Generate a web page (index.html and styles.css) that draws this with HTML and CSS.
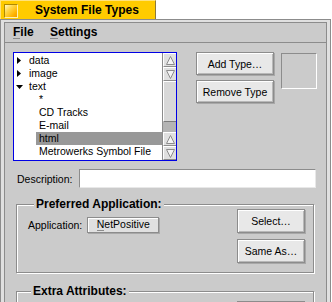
FILE: index.html
```html
<!DOCTYPE html>
<html lang="en">
<head>
  <meta charset="UTF-8">
  <title>System File Types</title>
  <link rel="stylesheet" href="styles.css">
</head>
<body>
  <div class="window">
    <div class="tab">
      <span class="close-box"></span>
      <span class="tab-title">System File Types</span>
    </div>
    <div class="frame">
      <div class="inner">
        <div class="menubar">
          <span class="menu"><span class="mn">F</span>ile</span>
          <span class="menu"><span class="mn">S</span>ettings</span>
        </div>

        <div class="content">
          <!-- type list + buttons -->
          <div class="top-row">
            <div class="type-list">
              <ul class="tree">
                <li class="row top"><svg class="twisty" width="8" height="8" viewBox="0 0 8 8"><polygon points="1,0 5,3.5 1,7"/></svg>data</li>
                <li class="row top"><svg class="twisty" width="8" height="8" viewBox="0 0 8 8"><polygon points="1,0 5,3.5 1,7"/></svg>image</li>
                <li class="row top"><svg class="twisty" width="8" height="8" viewBox="0 0 8 8"><polygon points="0,2 7,2 3.5,6"/></svg>text</li>
                <li class="row child">*</li>
                <li class="row child">CD Tracks</li>
                <li class="row child">E-mail</li>
                <li class="row child selected">html</li>
                <li class="row child">Metrowerks Symbol File</li>
              </ul>
              <div class="vscroll">
                <div class="sb-btn"><svg width="9" height="9" viewBox="0 0 9 9"><polygon points="0.5,8.5 4.5,0.5 8.5,8.5"/></svg></div>
                <div class="sb-btn"><svg width="9" height="9" viewBox="0 0 9 9"><polygon points="0.5,0.5 8.5,0.5 4.5,8.5"/></svg></div>
                <div class="sb-thumb"></div>
                <div class="sb-track"></div>
                <div class="sb-btn"><svg width="9" height="9" viewBox="0 0 9 9"><polygon points="0.5,8.5 4.5,0.5 8.5,8.5"/></svg></div>
                <div class="sb-btn"><svg width="9" height="9" viewBox="0 0 9 9"><polygon points="0.5,0.5 8.5,0.5 4.5,8.5"/></svg></div>
              </div>
            </div>
            <div class="type-buttons">
              <button class="btn">Add Type…</button>
              <button class="btn">Remove Type</button>
            </div>
            <div class="icon-well"></div>
          </div>

          <div class="desc-row">
            <span class="desc-label">Description:</span>
            <div class="textbox"></div>
          </div>

          <!-- Preferred Application -->
          <div class="box pref-box">
            <span class="box-title">Preferred Application:</span>
            <div class="box-body">
              <div class="app-field">
                <span class="app-label">Application:</span>
                <span class="app-menu"><span class="mn">N</span>etPositive</span>
              </div>
              <div class="app-buttons">
                <button class="btn">Select…</button>
                <button class="btn">Same As…</button>
              </div>
            </div>
          </div>

          <!-- Extra Attributes -->
          <div class="box extra-box">
            <span class="box-title">Extra Attributes:</span>
            <div class="box-body">
              <div class="attr-list">
                <div class="attr-col first"></div>
                <div class="attr-col"></div>
                <div class="attr-scroll"></div>
              </div>
              <button class="btn attr-btn"></button>
            </div>
          </div>
        </div>
      </div>
    </div>
  </div>
</body>
</html>
```

FILE: styles.css
```css
* {
  margin: 0;
  padding: 0;
  box-sizing: border-box;
}

body {
  width: 332px;
  height: 302px;
  overflow: hidden;
  background: #fff;
  font-family: "Liberation Sans", Arial, sans-serif;
  font-size: 10.5px;
  color: #000;
}

.window {
  width: 331px;
}

/* yellow title tab */
.tab {
  display: flex;
  align-items: flex-start;
  width: 156px;
  height: 19px;
  padding-left: 3px;
  background: #ffcb00;
  border-top: 1px solid #ffe27a;
  border-left: 1px solid #ffe27a;
  border-right: 1px solid #8c7a3c;
}

.close-box {
  width: 14px;
  height: 14px;
  margin-top: 3px;
  border: 1px solid #b08a00;
  border-right-color: #fff2b0;
  border-bottom-color: #fff2b0;
  background: linear-gradient(135deg, #fff7c8 0%, #ffd84a 35%, #ffb400 75%, #f09a00 100%);
}

.tab-title {
  margin-left: 17px;
  margin-top: 2px;
  font-size: 12px;
  font-weight: bold;
  line-height: 15px;
}

/* window border */
.frame {
  border: 1px solid #8c8c8c;
  padding: 2px 3px 3px 3px;
  background: #e0e0e0;
}

.inner {
  border: 1px solid #8c8c8c;
  background: #cbcbcb;
  height: 290px;
}

.menubar {
  height: 20px;
  padding-left: 8px;
  border-bottom: 1px solid #8c8c8c;
  font-size: 12px;
  font-weight: bold;
  line-height: 19px;
}

.menu {
  margin-right: 13px;
}

.mn {
  display: inline-block;
  line-height: 12px;
  border-bottom: 1px solid #8c8c8c;
}

.content {
  padding: 9px 8px 0 8px;
}

.top-row {
  display: flex;
  align-items: flex-start;
}

/* type list with blue focus border */
.type-list {
  display: flex;
  width: 164px;
  height: 109px;
  border: 1px solid #0000e5;
  background: #fff;
}

.tree {
  flex: 1;
  list-style: none;
  padding-top: 1px;
}

.row {
  display: flex;
  align-items: center;
  height: 13px;
  line-height: 13px;
  white-space: nowrap;
}

.row.top {
  padding-left: 2px;
}

.twisty {
  margin-right: 5px;
  fill: #000;
}

.row.child {
  margin-left: 22px;
  padding-left: 3px;
}

.row.selected {
  background: #989898;
}

.vscroll {
  display: flex;
  flex-direction: column;
  width: 14px;
  border-left: 1px solid #8c8c8c;
  background: #cbcbcb;
}

.sb-btn {
  display: flex;
  align-items: center;
  justify-content: center;
  height: 14px;
  background: #e0e0e0;
  border-top: 1px solid #fff;
  border-left: 1px solid #fff;
  border-bottom: 1px solid #8c8c8c;
}

.sb-btn svg {
  fill: #f4f4f4;
  stroke: #8c8c8c;
  stroke-width: 1;
}

.sb-thumb {
  height: 41px;
  background: #d8d8d8;
  border-top: 1px solid #fff;
  border-left: 1px solid #fff;
  border-bottom: 1px solid #7c7c7c;
}

.sb-track {
  flex: 1;
  background: #b4b4b4;
}

/* standard push button */
.btn {
  display: block;
  height: 23px;
  background: #e8e8e8;
  border: 1px solid #8c8c8c;
  box-shadow: inset 1px 1px 0 #fff, inset -1px -1px 0 #b8b8b8, 1px 1px 0 #a8a8a8;
  font-family: inherit;
  font-size: 10.5px;
  color: #000;
}

.type-buttons {
  margin-left: 19px;
}

.type-buttons .btn {
  width: 78px;
  margin-bottom: 5px;
}

.icon-well {
  width: 36px;
  height: 36px;
  margin-left: 7px;
  margin-top: 1px;
  border: 1px solid #8c8c8c;
  border-right-color: #fff;
  border-bottom-color: #fff;
}

/* description */
.desc-row {
  display: flex;
  align-items: center;
  margin-top: 8px;
}

.desc-label {
  width: 62px;
  margin-left: 4px;
}

.textbox {
  width: 237px;
  height: 19px;
  background: #fff;
  border: 1px solid #8c8c8c;
  border-right-color: #e8e8e8;
  border-bottom-color: #e8e8e8;
}

/* labelled boxes */
.box {
  margin-left: 3px;
  width: 298px;
  border: 1px solid #8c8c8c;
  box-shadow: inset 1px 1px 0 #fff, 1px 1px 0 #fff;
}

.box-title {
  display: table;
  margin: -8px 0 -6px 6px;
  padding: 0 2px;
  background: #cbcbcb;
  font-size: 12px;
  font-weight: bold;
  line-height: 14px;
}

.box-body {
  display: flex;
  align-items: flex-start;
}

.pref-box {
  margin-top: 16px;
  padding: 0 8px 3px 11px;
}

.app-field {
  display: flex;
  align-items: center;
  margin-top: 12px;
}

.app-label {
  margin-right: 5px;
}

.app-menu {
  width: 72px;
  height: 16px;
  line-height: 13px;
  text-align: center;
  background: #e0e0e0;
  border: 1px solid #8c8c8c;
  box-shadow: inset 1px 1px 0 #fff, 1px 1px 0 #a8a8a8;
}

.app-menu .mn {
  line-height: 11px;
}

.app-buttons {
  margin-left: auto;
  margin-top: 4px;
}

.app-buttons .btn {
  width: 68px;
  height: 24px;
  margin-bottom: 6px;
}

.extra-box {
  margin-top: 18px;
  height: 40px;
  padding: 0 8px 0 8px;
}

.attr-list {
  display: flex;
  width: 203px;
  height: 20px;
  margin-top: 11px;
  background: #fff;
  border-top: 1px solid #8c8c8c;
  border-left: 1px solid #8c8c8c;
}

.attr-col {
  width: 94px;
}

.attr-col.first {
  border-right: 1px solid #b4b4b4;
}

.attr-scroll {
  margin-left: auto;
  width: 14px;
  background: #e0e0e0;
  border-left: 1px solid #8c8c8c;
}

.attr-btn {
  width: 68px;
  margin-left: auto;
  margin-top: 9px;
}
```
